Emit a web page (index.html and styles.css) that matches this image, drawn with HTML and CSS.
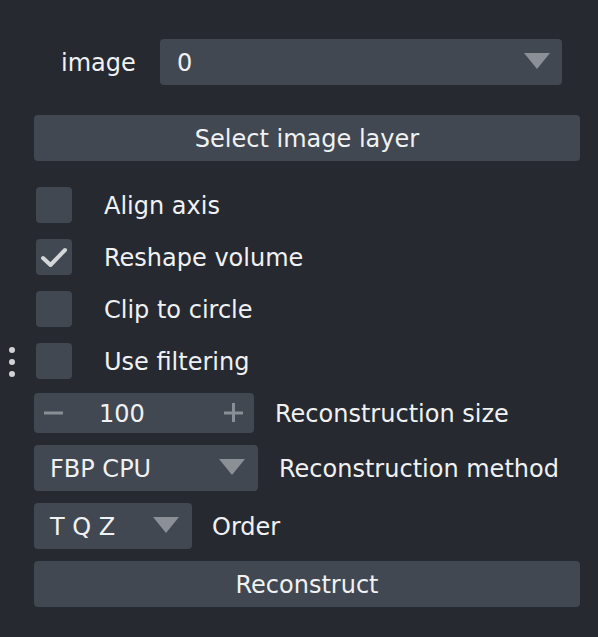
FILE: index.html
```html
<!DOCTYPE html>
<html>
<head>
<meta charset="utf-8">
<link rel="stylesheet" href="styles.css">
</head>
<body>
<div class="handle"><span></span><span></span><span></span></div>
<div class="panel">
  <div class="row-image">
    <span class="lbl-image">image</span>
    <div class="combo combo-image"><span>0</span><i class="tri"></i></div>
  </div>
  <div class="btn btn-select">Select image layer</div>
  <div class="checks">
    <div class="check"><span class="box"></span><span class="clabel">Align axis</span></div>
    <div class="check"><span class="box"><svg width="36" height="36" viewBox="0 0 36 36"><polyline points="7,19 14.5,26 29,11" fill="none" stroke="#d4d6d9" stroke-width="4" stroke-linecap="round" stroke-linejoin="round"/></svg></span><span class="clabel">Reshape volume</span></div>
    <div class="check"><span class="box"></span><span class="clabel">Clip to circle</span></div>
    <div class="check"><span class="box"></span><span class="clabel">Use filtering</span></div>
  </div>
  <div class="frow r-spin">
    <div class="spin">
      <svg class="pm" width="20" height="20" viewBox="0 0 20 20"><rect x="0" y="8.5" width="19" height="3" fill="#8a8e95"/></svg>
      <span class="val">100</span>
      <svg class="pm" width="20" height="20" viewBox="0 0 20 20"><rect x="0" y="8.5" width="19" height="3" fill="#8a8e95"/><rect x="8" y="0" width="3" height="19" fill="#8a8e95"/></svg>
    </div>
    <span class="flabel l-size">Reconstruction size</span>
  </div>
  <div class="frow r-method">
    <div class="combo combo-method"><span>FBP CPU</span><i class="tri"></i></div>
    <span class="flabel l-method">Reconstruction method</span>
  </div>
  <div class="frow r-order">
    <div class="combo combo-order"><span>T Q Z</span><i class="tri"></i></div>
    <span class="flabel l-order">Order</span>
  </div>
  <div class="btn btn-recon">Reconstruct</div>
</div>
</body>
</html>
```
FILE: styles.css
```css
html, body {
  margin: 0;
  padding: 0;
  background: #262930;
  width: 598px;
  height: 637px;
  overflow: hidden;
}
body {
  font-family: "DejaVu Sans", "Liberation Sans", sans-serif;
  font-size: 24px;
  color: #f0f1f2;
  position: relative;
}
.handle {
  position: absolute;
  left: 9px;
  top: 347px;
  display: flex;
  flex-direction: column;
  gap: 6px;
}
.handle span {
  width: 6px;
  height: 6px;
  border-radius: 50%;
  background: #d0d2d5;
}
.panel {
  padding: 39px 18px 0 34px;
  display: flex;
  flex-direction: column;
}
.row-image {
  display: flex;
  align-items: center;
  height: 46px;
}
.lbl-image {
  padding-left: 27px;
  width: 126px;
  flex-shrink: 0;
  box-sizing: border-box;
  padding-top: 1px;
}
.combo {
  background: #414851;
  border-radius: 4px;
  height: 46px;
  box-sizing: border-box;
  display: flex;
  align-items: center;
  justify-content: space-between;
  flex-shrink: 0;
  padding-top: 1px;
}
.combo-image {
  width: 402px;
  padding: 1px 12px 0 17px;
}
.tri {
  width: 0;
  height: 0;
  border-left: 13px solid transparent;
  border-right: 13px solid transparent;
  border-top: 16px solid #8b8f96;
  margin-top: -3px;
}
.btn {
  background: #414851;
  border-radius: 4px;
  height: 46px;
  width: 546px;
  display: flex;
  align-items: center;
  justify-content: center;
  padding-top: 1px;
  box-sizing: border-box;
}
.btn-select { margin-top: 30px; }
.checks {
  margin-top: 26px;
  display: flex;
  flex-direction: column;
  gap: 16px;
}
.check {
  display: flex;
  align-items: center;
  height: 36px;
  padding-left: 2px;
}
.box {
  width: 36px;
  height: 36px;
  border-radius: 4px;
  background: #414851;
  display: block;
  flex-shrink: 0;
}
.box svg { display: block; }
.clabel { margin-left: 32px; padding-top: 1px; }
.frow {
  display: flex;
  align-items: center;
}
.flabel { padding-top: 1px; }
.r-spin { margin-top: 14px; }
.spin {
  width: 220px;
  height: 40px;
  background: #414851;
  border-radius: 4px;
  display: flex;
  align-items: center;
  padding: 1px 10px 0;
  box-sizing: border-box;
  flex-shrink: 0;
}
.spin .val { margin-left: 35px; flex: 1; }
.pm { display: block; margin-top: -1px; }
.l-size { margin-left: 21px; }
.r-method { margin-top: 12px; }
.combo-method {
  width: 224px;
  padding: 1px 13px 0 16px;
}
.l-method { margin-left: 21px; }
.r-order { margin-top: 12px; }
.combo-order {
  width: 158px;
  padding: 1px 13px 0 16px;
}
.l-order { margin-left: 20px; }
.btn-recon { margin-top: 12px; }
```
